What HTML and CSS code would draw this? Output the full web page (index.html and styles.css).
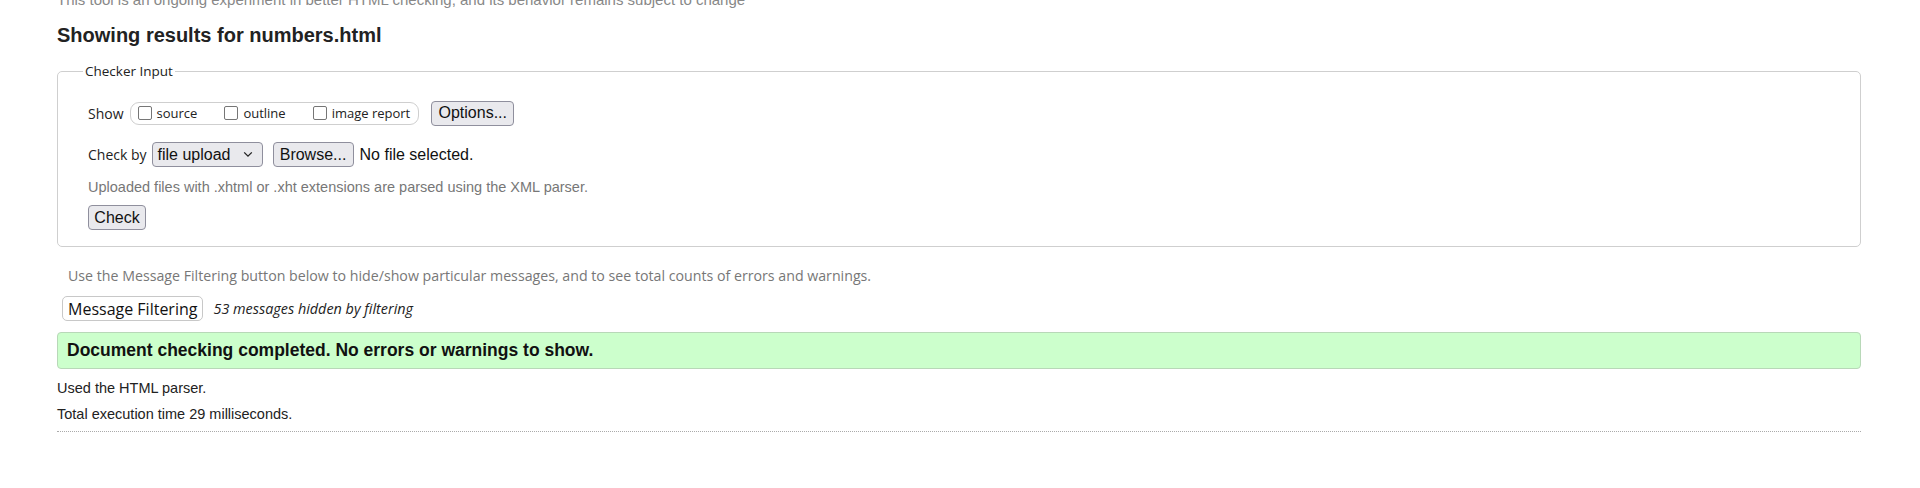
FILE: index.html
```html
<!DOCTYPE html>
<html lang="en">
<head>
<meta charset="utf-8">
<title>Showing results for numbers.html - Nu Html Checker</title>
<link rel="stylesheet" href="styles.css">
</head>
<body>
<p class="intro">This tool is an ongoing experiment in better HTML checking, and its behavior remains subject to change</p>
<h2 class="title">Showing results for numbers.html</h2>
<form class="form">
  <fieldset class="checker">
    <legend class="legend">Checker Input</legend>
    <div class="row row-show">
      <span class="label">Show</span>
      <span class="pill">
        <label class="opt"><span class="box"></span><span class="opt-text">source</span></label>
        <label class="opt"><span class="box"></span><span class="opt-text">outline</span></label>
        <label class="opt"><span class="box"></span><span class="opt-text">image report</span></label>
      </span>
      <span class="btn btn-options">Options...</span>
    </div>
    <div class="row row-by">
      <span class="label">Check by</span>
      <span class="btn select"><span>file upload</span><svg class="chev" width="10" height="7" viewBox="0 0 10 7"><path d="M1.2 1.4 L5 5.2 L8.8 1.4" fill="none" stroke="#222" stroke-width="1.3"/></svg></span>
      <span class="btn btn-browse">Browse...</span>
      <span class="nofile">No file selected.</span>
    </div>
    <p class="hint">Uploaded files with .xhtml or .xht extensions are parsed using the XML parser.</p>
    <div class="row row-check">
      <span class="btn btn-check">Check</span>
    </div>
  </fieldset>
</form>
<p class="filter-note">Use the Message Filtering button below to hide/show particular messages, and to see total counts of errors and warnings.</p>
<div class="filter-row">
  <span class="btn-filter">Message Filtering</span>
  <span class="hidden-count">53 messages hidden by filtering</span>
</div>
<p class="success">Document checking completed. No errors or warnings to show.</p>
<p class="stat">Used the HTML parser.</p>
<p class="stat">Total execution time 29 milliseconds.</p>
<hr class="rule">
</body>
</html>
```
FILE: styles.css
```css
html, body {
  background: #fff;
}
body {
  margin: 0;
  padding: 0 59px 0 57px;
  font-family: "Liberation Sans", Arial, sans-serif;
  color: #222;
  overflow: hidden;
}
.intro {
  margin: -8px 0 0;
  font-size: 15px;
  line-height: 16px;
  color: #888;
  white-space: nowrap;
}
.title {
  margin: 16px 0 0;
  font-size: 20px;
  line-height: 23px;
  font-weight: bold;
  color: #222;
}
.form {
  margin: 14px 0 0;
}
.checker {
  margin: 0;
  padding: 19px 30px 16px 30px;
  border: 1px solid #cfcfcf;
  border-radius: 5px;
  min-inline-size: 0;
}
.legend {
  margin-left: -5px;
  padding: 0 2px;
  font-family: "Open Sans", sans-serif;
  font-size: 13.5px;
  line-height: 20px;
  color: #222;
}
.row {
  display: flex;
  align-items: center;
}
.row-show {
  height: 26px;
}
.row-by {
  margin-top: 16px;
  height: 25px;
}
.label {
  font-family: "Open Sans", sans-serif;
  font-size: 14px;
  color: #222;
}
.row-show .label {
  margin-right: 6px;
}
.row-by .label {
  margin-right: 5px;
}
.pill {
  display: flex;
  align-items: center;
  height: 21px;
  padding: 0 8px 0 7px;
  border: 1px solid #cfcfcf;
  border-radius: 9px;
  gap: 27px;
}
.opt {
  display: flex;
  align-items: center;
  gap: 5px;
}
.box {
  width: 12px;
  height: 12px;
  border: 1px solid #767676;
  border-radius: 2px;
  background: #fff;
}
.opt-text {
  font-family: "Open Sans", sans-serif;
  font-size: 13px;
  color: #222;
}
.btn {
  display: inline-flex;
  align-items: center;
  box-sizing: border-box;
  height: 25px;
  padding: 0 6px;
  border: 1px solid #8f8f9d;
  border-radius: 4px;
  background: #e9e9ed;
  font-size: 16px;
  color: #111;
}
.btn-options {
  margin-left: 12px;
  width: 83px;
  justify-content: center;
}
.select {
  width: 111px;
  justify-content: space-between;
  padding: 0 9px 0 5px;
}
.chev {
  display: block;
}
.btn-browse {
  margin-left: 10px;
  width: 81px;
  justify-content: center;
}
.nofile {
  margin-left: 6px;
  font-size: 16px;
  color: #111;
}
.hint {
  margin: 10px 0 0;
  font-size: 14.5px;
  line-height: 20px;
  color: #777;
}
.row-check {
  margin-top: 8px;
}
.btn-check {
  width: 58px;
  justify-content: center;
}
.filter-note {
  margin: 19px 0 0;
  padding-left: 11px;
  font-family: "Open Sans", sans-serif;
  font-size: 14.2px;
  line-height: 20px;
  color: #777;
}
.filter-row {
  display: flex;
  align-items: center;
  margin-top: 10px;
  height: 25px;
}
.btn-filter {
  box-sizing: border-box;
  display: inline-flex;
  align-items: center;
  height: 25px;
  margin-left: 5px;
  padding: 0 5px;
  border: 1px solid #c8c8c8;
  border-radius: 5px;
  background: #fff;
  font-family: "Open Sans", sans-serif;
  font-size: 16px;
  color: #111;
}
.hidden-count {
  margin-left: 10px;
  font-family: "Open Sans", sans-serif;
  font-style: italic;
  font-size: 14.4px;
  color: #222;
}
.success {
  box-sizing: border-box;
  margin: 11px 0 0;
  height: 37px;
  padding: 0 9px;
  display: flex;
  align-items: center;
  background: #ccffcc;
  border: 1px solid #b8d8b8;
  border-radius: 4px;
  font-size: 17.5px;
  font-weight: bold;
  color: #111;
}
.stat {
  margin: 6px 0 0;
  font-size: 14.5px;
  line-height: 20px;
  color: #222;
}
.success + .stat {
  margin-top: 9px;
}
.rule {
  margin: 7px 0 0;
  border: 0;
  border-top: 1px dotted #aaa;
  height: 0;
}
```
